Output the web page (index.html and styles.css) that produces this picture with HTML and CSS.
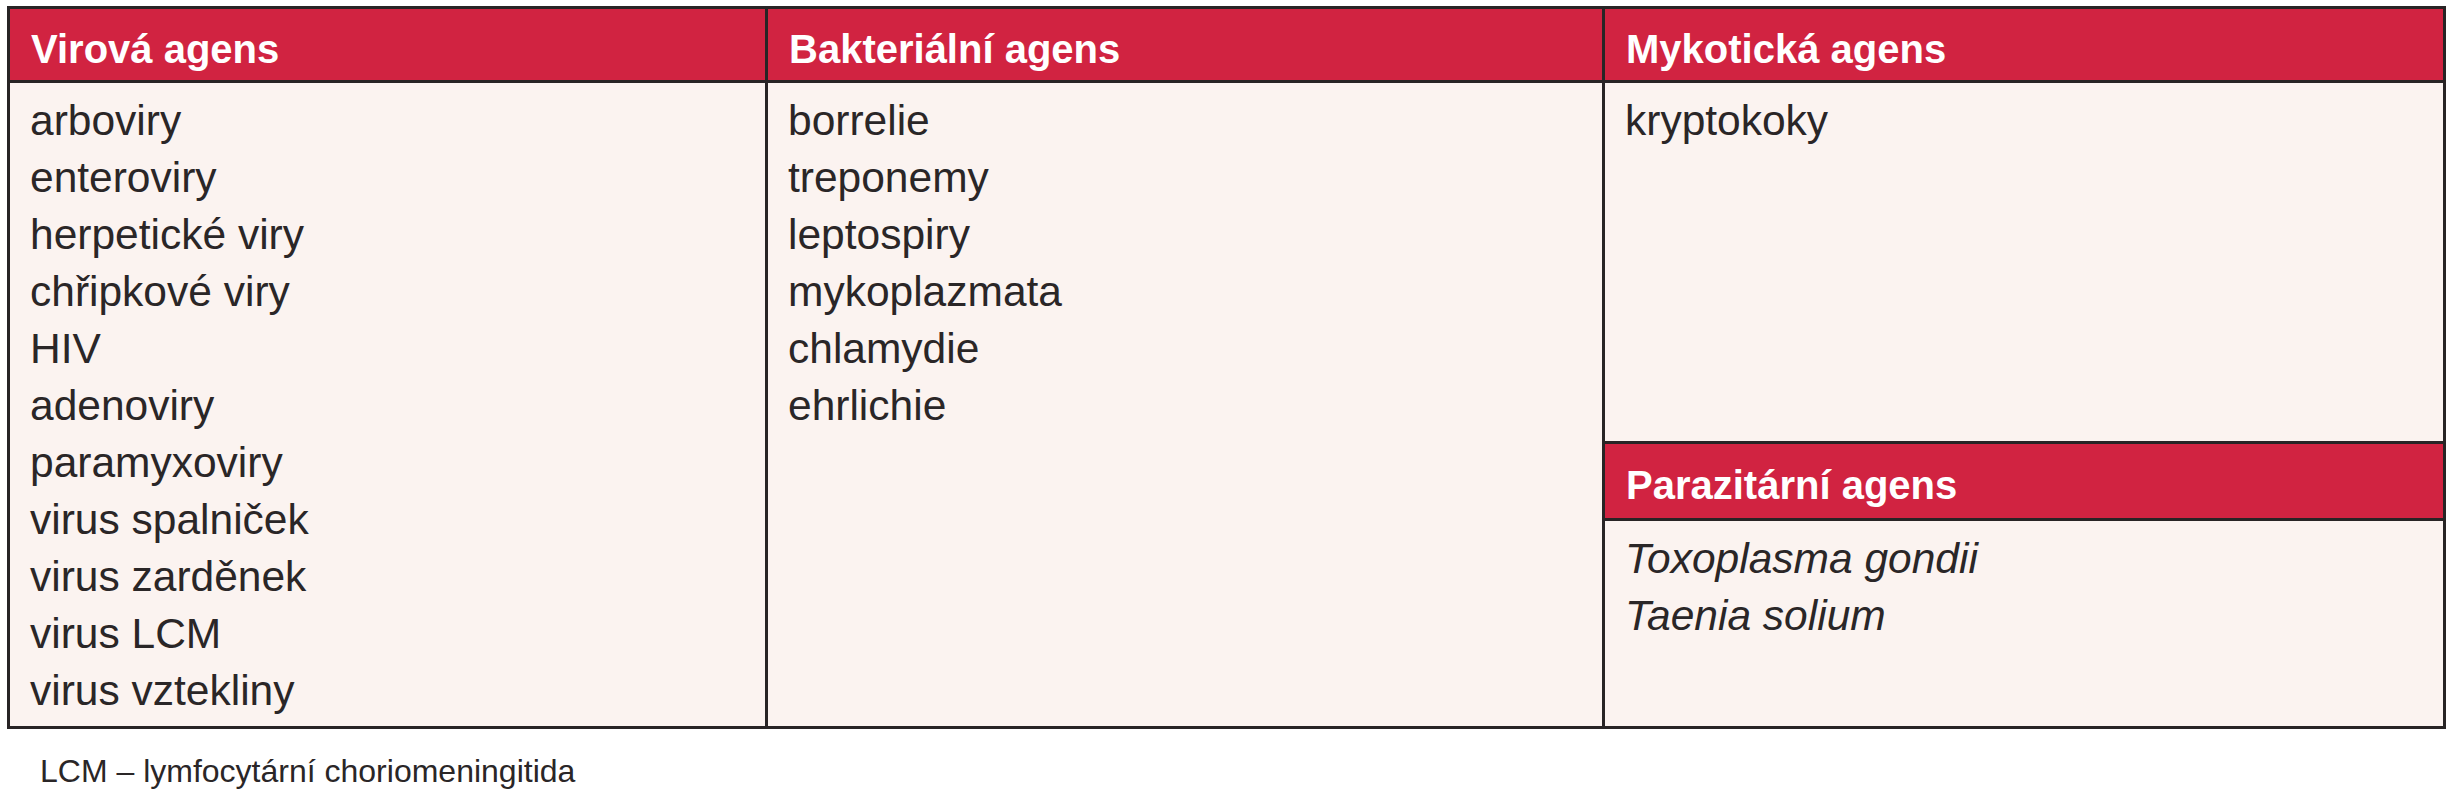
FILE: index.html
```html
<!DOCTYPE html>
<html lang="cs">
<head>
<meta charset="utf-8">
<title>Agens</title>
<link rel="stylesheet" href="styles.css">
</head>
<body>
<div class="table">
  <div class="col col-1">
    <div class="head">Virová agens</div>
    <ul class="body">
      <li>arboviry</li>
      <li>enteroviry</li>
      <li>herpetické viry</li>
      <li>chřipkové viry</li>
      <li>HIV</li>
      <li>adenoviry</li>
      <li>paramyxoviry</li>
      <li>virus spalniček</li>
      <li>virus zarděnek</li>
      <li>virus LCM</li>
      <li>virus vztekliny</li>
    </ul>
  </div>
  <div class="col col-2">
    <div class="head">Bakteriální agens</div>
    <ul class="body">
      <li>borrelie</li>
      <li>treponemy</li>
      <li>leptospiry</li>
      <li>mykoplazmata</li>
      <li>chlamydie</li>
      <li>ehrlichie</li>
    </ul>
  </div>
  <div class="col col-3">
    <div class="head">Mykotická agens</div>
    <ul class="body body-fixed">
      <li>kryptokoky</li>
    </ul>
    <div class="head head-sub">Parazitární agens</div>
    <ul class="body italic">
      <li>Toxoplasma gondii</li>
      <li>Taenia solium</li>
    </ul>
  </div>
</div>
<p class="note">LCM – lymfocytární choriomeningitida</p>
</body>
</html>
```
FILE: styles.css
```css
html, body {
  margin: 0;
  padding: 0;
  background: #ffffff;
}

body {
  font-family: "Liberation Sans", Arial, sans-serif;
  color: #2a2627;
}

.table {
  margin: 6px 0 0 7px;
  width: 2439px;
  box-sizing: border-box;
  border: 3px solid #282425;
  display: grid;
  grid-template-columns: 758px 837px 838px;
  background: #fbf3f0;
}

.col {
  display: flex;
  flex-direction: column;
  box-sizing: border-box;
}

.col-1, .col-2 {
  border-right: 3px solid #282425;
}

.head {
  flex: 0 0 auto;
  height: 74px;
  box-sizing: border-box;
  padding: 17px 0 0 21px;
  background: #d12341;
  color: #ffffff;
  font-weight: bold;
  font-size: 40px;
  line-height: 46px;
  border-bottom: 3px solid #282425;
}

.head-sub {
  height: 80px;
  border-top: 3px solid #282425;
  padding-top: 18px;
}

.body {
  list-style: none;
  margin: 0;
  padding: 9px 0 7px 20px;
  font-size: 42.5px;
  line-height: 57px;
  flex: 1 1 auto;
}

.body-fixed {
  flex: 0 0 auto;
  height: 342px;
}

.italic {
  font-style: italic;
}

.note {
  margin: 24px 0 0 40px;
  font-size: 32px;
  line-height: 37px;
  color: #2a2627;
}
```
